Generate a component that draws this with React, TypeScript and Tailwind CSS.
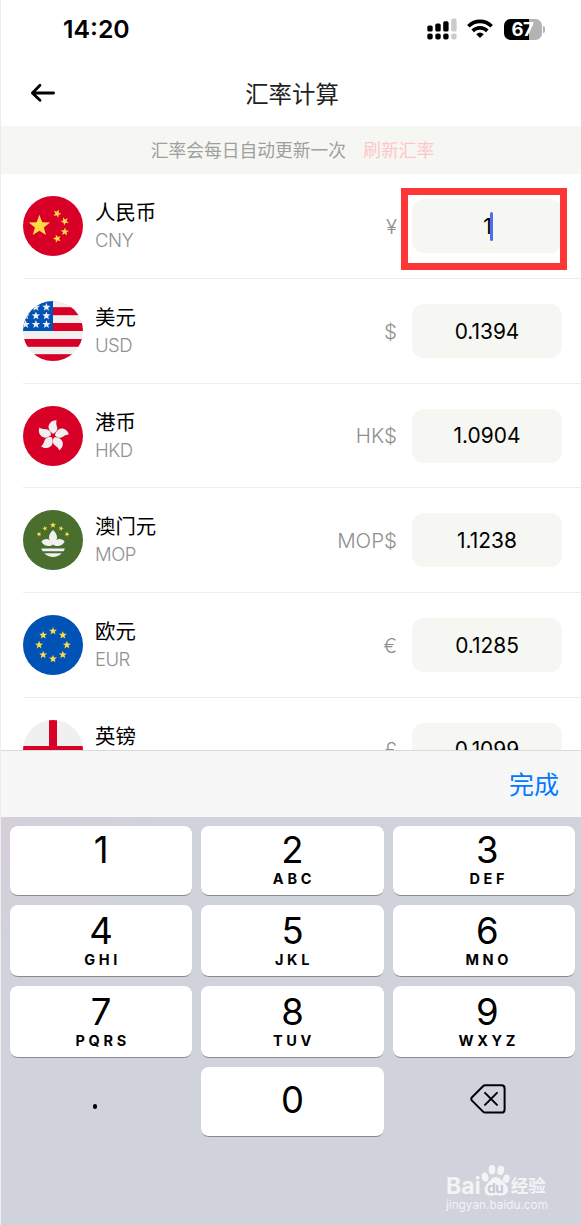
import type { ReactNode } from 'react'

const SANS = "font-['Inter','Noto_Sans_CJK_SC',sans-serif]"

type StarProps = { x: number; y: number; r: number; rotate?: number }

function Star({ x, y, r, rotate = 0 }: StarProps) {
  const points = Array.from({ length: 10 }).map((_, i) => {
    const radius = i % 2 === 0 ? r : r * 0.42
    const angle = ((i * 36 + rotate - 90) * Math.PI) / 180
    return `${(x + radius * Math.cos(angle)).toFixed(2)},${(y + radius * Math.sin(angle)).toFixed(2)}`
  })
  return <polygon points={points.join(' ')} />
}

function Flag({ id, bg, children }: { id: string; bg: string; children: ReactNode }) {
  return (
    <svg viewBox="0 0 60 60" className="size-[60px] shrink-0">
      <clipPath id={id}>
        <circle cx="30" cy="30" r="30" />
      </clipPath>
      <g clipPath={`url(#${id})`}>
        <rect width="60" height="60" fill={bg} />
        {children}
      </g>
    </svg>
  )
}

function ChinaFlag() {
  return (
    <Flag id="cn" bg="#d80027">
      <g fill="#ffda44">
        <Star x={16.4} y={30} r={11.2} />
        <Star x={34.2} y={17.6} r={4.3} rotate={22} />
        <Star x={41.8} y={25.2} r={4.3} rotate={45} />
        <Star x={41.8} y={35.8} r={4.3} rotate={4} />
        <Star x={34.2} y={42.6} r={4.3} rotate={-18} />
      </g>
    </Flag>
  )
}

function UsaFlag() {
  return (
    <Flag id="us" bg="#f0f0f0">
      <g fill="#d80027">
        <rect x="28" y="6.2" width="32" height="8" />
        <rect x="28" y="22" width="32" height="8" />
        <rect y="38" width="60" height="7.8" />
        <rect y="53.2" width="60" height="7" />
      </g>
      <rect width="30" height="30" fill="#0052b4" />
      <g fill="#f0f0f0">
        {[6.2, 14.8, 23.4].map((y) =>
          [2.6, 12.9, 23.4].map((x) => <Star key={`${x}-${y}`} x={x} y={y} r={4.4} />),
        )}
      </g>
    </Flag>
  )
}

function HongKongFlag() {
  return (
    <Flag id="hk" bg="#d80027">
      <g fill="#f0f0f0">
        {[0, 72, 144, 216, 288].map((deg) => (
          <path
            key={deg}
            transform={`rotate(${deg} 30 29.8)`}
            d="M33.6 14.4C28.4 14 24.6 18.4 25.8 22.8C26.5 25.4 28.3 26.6 29.8 27.8C33.4 26.8 35 23.6 34 20.6C33.2 18.6 33 16.5 33.6 14.4Z"
          />
        ))}
      </g>
    </Flag>
  )
}

function MacauFlag() {
  return (
    <Flag id="mo" bg="#496e2d">
      <g fill="#ffda44">
        <Star x={30} y={15.2} r={3.2} />
        <Star x={22} y={18.4} r={2.6} rotate={-15} />
        <Star x={38} y={18.4} r={2.6} rotate={15} />
        <Star x={16} y={24.2} r={2.6} rotate={-30} />
        <Star x={44} y={24.2} r={2.6} rotate={30} />
      </g>
      <g fill="#f0f0f0">
        <path d="M30 20C27.5 22.2 26 24.8 26 27.3C26 30.2 27.6 32.8 30 34.5C32.4 32.8 34 30.2 34 27.3C34 24.8 32.5 22.2 30 20Z" />
        <path d="M18.4 31.8C20.6 28.6 26 27.4 30 33.2C34 27.4 39.4 28.6 41.6 31.8C39.4 36.2 33.4 37.4 30 34.6C26.6 37.4 20.6 36.2 18.4 31.8Z" />
        <path d="M18.4 38.6H41.8Q41.4 40.2 40.6 41.2H19.6Q18.8 40.2 18.4 38.6Z" />
        <path d="M21.4 43.2H38.8Q35 47 30 47T21.4 43.2Z" />
      </g>
    </Flag>
  )
}

function EuFlag() {
  return (
    <Flag id="eu" bg="#0052b4">
      <g fill="#ffda44">
        {Array.from({ length: 8 }).map((_, i) => (
          <Star
            key={i}
            x={30 + 13.9 * Math.sin((i * Math.PI) / 4)}
            y={30 - 13.9 * Math.cos((i * Math.PI) / 4)}
            r={4.2}
          />
        ))}
      </g>
    </Flag>
  )
}

function EnglandFlag() {
  return (
    <Flag id="en" bg="#f0f0f0">
      <path fill="#d80027" d="M26 0h8v26h26v8H34v26h-8V34H0v-8h26z" />
    </Flag>
  )
}

const currencies = [
  { name: '人民币', code: 'CNY', symbol: '¥', value: '1', flag: <ChinaFlag />, active: true },
  { name: '美元', code: 'USD', symbol: '$', value: '0.1394', flag: <UsaFlag /> },
  { name: '港币', code: 'HKD', symbol: 'HK$', value: '1.0904', flag: <HongKongFlag /> },
  { name: '澳门元', code: 'MOP', symbol: 'MOP$', value: '1.1238', flag: <MacauFlag /> },
  { name: '欧元', code: 'EUR', symbol: '€', value: '0.1285', flag: <EuFlag /> },
  { name: '英镑', code: 'GBP', symbol: '£', value: '0.1099', flag: <EnglandFlag /> },
]

const keys = [
  ['1', ''],
  ['2', 'ABC'],
  ['3', 'DEF'],
  ['4', 'GHI'],
  ['5', 'JKL'],
  ['6', 'MNO'],
  ['7', 'PQRS'],
  ['8', 'TUV'],
  ['9', 'WXYZ'],
]

function StatusBar() {
  return (
    <div className="flex h-[58px] items-center pr-[36px] pl-[62px]">
      <span className="text-[24.8px] leading-none font-semibold text-black">14:20</span>
      <svg viewBox="0 0 30 22" className="ml-auto h-[22px] w-[30px]">
        <g fill="#000">
          <rect x="0.3" y="7.5" width="5.4" height="6" rx="1.6" />
          <rect x="8.3" y="5.6" width="5.4" height="7.9" rx="1.6" />
          <rect x="16.2" y="3.3" width="5.4" height="10.2" rx="1.6" />
          <rect x="0.3" y="15.5" width="5.4" height="6" rx="2" />
          <rect x="8.3" y="15.5" width="5.4" height="6" rx="2" />
          <rect x="16.2" y="15.5" width="5.4" height="6" rx="2" />
        </g>
        <g fill="#ccc">
          <rect x="24.2" y="0.5" width="5.4" height="13" rx="1.6" />
          <rect x="24.2" y="15.5" width="5.4" height="6" rx="2" />
        </g>
      </svg>
      <svg viewBox="0 0 26 20" className="ml-[10px] h-5 w-[26px]" fill="none" stroke="#000" strokeWidth="3.6">
        <path d="M1.4 7.2C8 0.7 18 0.7 24.6 7.2" />
        <path d="M5.7 11.9C9.8 7.9 16.2 7.9 20.3 11.9" />
        <path d="M9.2 15.3Q13 11.9 16.8 15.3L13 19.1Z" fill="#000" stroke="none" />
      </svg>
      <div className="ml-[11px] flex items-center gap-[1px]">
        <div className="flex h-[21px] w-[38px] items-center justify-center rounded-[6.5px] bg-linear-to-r from-black from-67% to-[#b3b3b3] to-67%">
          <span className="text-[18.5px] leading-none font-bold tracking-[-0.5px] text-white">67</span>
        </div>
        <div className="h-[7px] w-[2.5px] rounded-r-full bg-[#b3b3b3]" />
      </div>
    </div>
  )
}

function Header() {
  return (
    <header className="flex h-[68px] items-center pt-[2px]">
      <svg
        viewBox="0 0 26 20"
        className="ml-[29px] h-5 w-[26px]"
        fill="none"
        stroke="#000"
        strokeWidth="2.8"
        strokeLinecap="round"
        strokeLinejoin="round"
      >
        <path d="M10 2.2L2.4 10L10 17.2M2.4 10H23.6" />
      </svg>
      <h1 className="flex-1 pt-[3px] pr-[53px] text-center text-[23.4px] leading-none font-normal text-[#222]">
        汇率计算
      </h1>
    </header>
  )
}

function CurrencyRow({ name, code, symbol, value, flag, active }: (typeof currencies)[number]) {
  return (
    <li className="ml-[22px] flex h-[104.67px] shrink-0 items-center border-b border-[#ececec] pr-[19px]">
      {flag}
      <div className="ml-3 flex flex-col pt-px">
        <span className="text-[20.4px] leading-7 text-black">{name}</span>
        <span className="-mt-px text-[18.5px] leading-7 font-light tracking-[-0.5px] text-[#8f8f8f]">{code}</span>
      </div>
      <span className="mr-[15px] ml-auto pt-[2px] text-[20.5px] font-light text-[#8f8f8f]">{symbol}</span>
      <div className="relative flex h-[54px] w-[150px] items-center justify-center rounded-[12px] bg-[#f6f7f2] text-[20.9px] text-black">
        <span className="pt-px">{value}</span>
        {active && <span className="-mr-[2px] -ml-[2px] h-[29px] w-[3px] rounded-full bg-[#4a6ff0]" />}
        {active && (
          <div className="absolute -top-[11px] -left-[11px] h-[82px] w-[166px] border-7 border-[#fc3736]" />
        )}
      </div>
    </li>
  )
}

function Keypad() {
  return (
    <div className="grid grid-cols-3 grid-rows-[70px_71.5px_71.5px_70px] gap-x-[9px] gap-y-[9.3px] pt-[9px] pr-[6px] pl-[9px]">
      {keys.map(([digit, letters]) => (
        <button
          key={digit}
          className="flex flex-col items-center rounded-[8px] border-b-[1.5px] border-[#898a8d] bg-white pt-[6px] text-black nth-[3n]:pl-[7px] nth-[n+4]:pt-[7.5px]"
        >
          <span className="text-[36.5px] leading-9">{digit}</span>
          <span className="mt-[3px] pl-[3px] text-[14.5px] leading-[15px] font-bold tracking-[3.7px]">{letters}</span>
        </button>
      ))}
      <button className="flex items-center justify-center pt-[9px] pr-[12px]">
        <span className="size-[4.6px] rounded-full bg-black" />
      </button>
      <button className="flex items-center justify-center rounded-[8px] border-b-[1.5px] border-[#898a8d] bg-white pb-[2px] text-[36.5px] leading-none text-black">
        0
      </button>
      <button className="flex items-center justify-center pb-[5px] pl-[8px]">
        <svg
          viewBox="0 0 36 30"
          className="h-[30px] w-9"
          fill="none"
          stroke="#000"
          strokeWidth="2"
          strokeLinecap="round"
          strokeLinejoin="round"
        >
          <path d="M15.2 1.2H31.4Q34.6 1.2 34.6 4.4V25.4Q34.6 28.6 31.4 28.6H15.2Q14 28.6 13 27.6L2 16.6Q0.6 15 2 13.2L13 2.2Q14 1.2 15.2 1.2Z" />
          <path d="M15 8.9L27 20.9M27 8.9L15 20.9" />
        </svg>
      </button>
    </div>
  )
}

function Watermark() {
  return (
    <div className="mt-auto mr-[33px] mb-[14px] flex flex-col self-end text-white/75">
      <div className="flex h-[34px] items-end">
        <span className="text-[23px] leading-[22px] font-bold">Bai</span>
        <svg viewBox="0 0 30 34" className="h-[34px] w-[29px]">
          <g fill="currentColor">
            <ellipse cx="4.2" cy="14" rx="3.4" ry="4.8" transform="rotate(-14 4.2 14)" />
            <ellipse cx="11.4" cy="6.4" rx="3.4" ry="4.9" />
            <ellipse cx="20.4" cy="7" rx="3.5" ry="4.9" transform="rotate(10 20.4 7)" />
            <ellipse cx="26.2" cy="15.6" rx="3.4" ry="4.4" transform="rotate(16 26.2 15.6)" />
            <path d="M15 14C11.5 14 9.5 18 6.5 20.5C2.5 24 2.4 32.6 9 33C12 33.2 13.5 32.4 15.5 32.4S20 33.2 22.5 33C29 32.4 29.4 25 25 21C21 17.4 19.3 14 15 14Z" />
          </g>
          <text x="6.5" y="30.5" fontSize="14" fontWeight="700" fill="#c6c9d1" textLength="17">
            du
          </text>
        </svg>
        <span className="ml-px text-[17.5px] leading-[22px] font-bold">经验</span>
      </div>
      <span className="mt-[2px] text-[11.8px] leading-3 whitespace-nowrap">jingyan.baidu.com</span>
    </div>
  )
}

export default function App() {
  return (
    <main className={`flex h-[1225px] w-[581px] flex-col overflow-hidden border-l border-[#ededed] bg-white ${SANS}`}>
      <StatusBar />
      <Header />
      <div className="flex h-12 items-center justify-center gap-[17px] bg-[#f6f7f2] pt-[2px] pl-[3px] text-[17.75px]">
        <span className="text-[#9f9f9f]">汇率会每日自动更新一次</span>
        <span className="text-[#ffc6ca]">刷新汇率</span>
      </div>

      <ul className="flex h-[576px] flex-col overflow-hidden pt-[0.5px]">
        {currencies.map((currency) => (
          <CurrencyRow key={currency.code} {...currency} />
        ))}
      </ul>

      {/* Numeric keyboard */}
      <div className="flex h-[67px] items-center justify-end border-t border-[#d8d8d8] bg-[#f7f7f7] pt-[3px] pr-[22px] text-[25px] text-[#007aff]">
        完成
      </div>
      <div className="flex flex-1 flex-col bg-[#d0d3db] bg-radial-[at_0%_5%] from-[#d5cfda] to-[#d0d3db] to-20%">
        <Keypad />
        <Watermark />
      </div>
    </main>
  )
}
